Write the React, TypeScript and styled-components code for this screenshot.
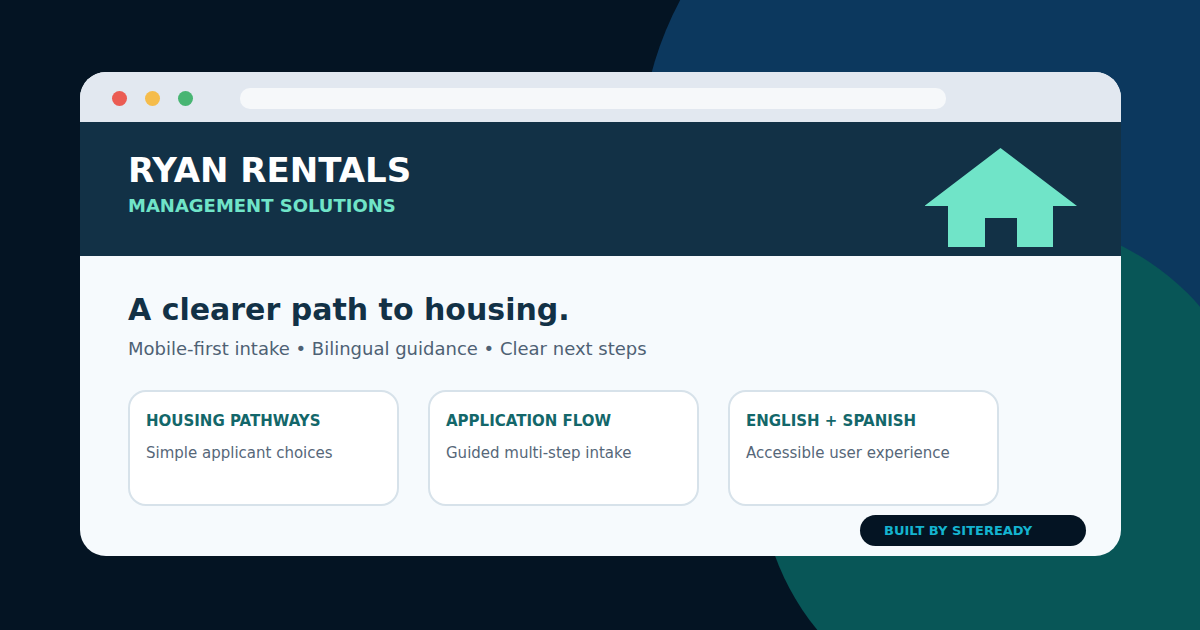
import React from "react";
import styled, { createGlobalStyle } from "styled-components";

const GlobalStyle = createGlobalStyle`
  * { box-sizing: border-box; }
  body {
    margin: 0;
    background: #041423;
    font-family: "DejaVu Sans", Verdana, sans-serif;
  }
  h1, h2, h3, p { margin: 0; }
`;

const Page = styled.div`
  position: relative;
  min-height: 100vh;
  overflow: hidden;
  padding: 72px 79px 74px 80px;
`;

const Circle = styled.div<{ $size: number; $top: number; $right: number; $color: string }>`
  position: absolute;
  top: ${(p) => p.$top}px;
  right: ${(p) => p.$right}px;
  width: ${(p) => p.$size}px;
  height: ${(p) => p.$size}px;
  border-radius: 50%;
  background: ${(p) => p.$color};
`;

const BrowserWindow = styled.main`
  position: relative;
  overflow: hidden;
  border-radius: 26px;
  background: #f6fafd;
`;

const Toolbar = styled.div`
  display: flex;
  align-items: center;
  height: 50px;
  padding: 3px 175px 0 32px;
  background: #e2e8f0;
`;

const Dots = styled.div`
  display: flex;
  gap: 18px;
  margin-right: 47px;
`;

const Dot = styled.span<{ $color: string }>`
  width: 15px;
  height: 15px;
  border-radius: 50%;
  background: ${(p) => p.$color};
`;

const AddressBar = styled.input`
  flex: 1;
  min-width: 0;
  height: 21px;
  padding: 0 12px;
  border: 0;
  border-radius: 10px;
  background: #f6f8fa;
`;

const Header = styled.header`
  display: flex;
  justify-content: space-between;
  align-items: flex-start;
  padding: 26px 44px 9px 48px;
  background: #123146;
`;

const Brand = styled.div`
  padding-top: 2px;
`;

const BrandName = styled.h1`
  font-size: 34px;
  line-height: 40px;
  color: #ffffff;
`;

const BrandTagline = styled.p`
  margin-top: 5px;
  font-size: 18px;
  font-weight: 700;
  line-height: 22px;
  color: #70e4c8;
`;

const Content = styled.section`
  display: flex;
  flex-direction: column;
  padding: 36px 35px 10px 48px;
`;

const Heading = styled.h2`
  font-size: 30px;
  line-height: 36px;
  color: #123146;
`;

const Summary = styled.p`
  margin-top: 10px;
  font-size: 18px;
  line-height: 22px;
  color: #4e6174;
`;

const Cards = styled.div`
  display: grid;
  grid-template-columns: repeat(3, 1fr);
  gap: 29px;
  margin: 30px 87px 0 0;
`;

const Card = styled.article`
  min-height: 116px;
  padding: 20px 16px;
  border: 2px solid #d7e2ea;
  border-radius: 18px;
  background: #ffffff;
`;

const CardTitle = styled.h3`
  font-size: 15px;
  line-height: 18px;
  color: #13676a;
`;

const CardText = styled.p`
  margin-top: 14px;
  font-size: 15px;
  line-height: 18px;
  color: #566779;
`;

const Badge = styled.a`
  align-self: flex-end;
  width: 226px;
  margin-top: 9px;
  padding: 0 24px;
  border-radius: 16px;
  background: #041423;
  font-size: 13px;
  font-weight: 700;
  line-height: 31px;
  color: #14b4d0;
  text-decoration: none;
`;

const features = [
  { title: "HOUSING PATHWAYS", text: "Simple applicant choices" },
  { title: "APPLICATION FLOW", text: "Guided multi-step intake" },
  { title: "ENGLISH + SPANISH", text: "Accessible user experience" },
];

function House() {
  return (
    <svg width="152" height="99" viewBox="0 0 152 99" fill="#70e4c8" aria-hidden="true">
      <path d="M75.5 0 152 58H128V99H92V70H60V99H23V58H-.5Z" />
    </svg>
  );
}

export default function App() {
  return (
    <Page>
      <GlobalStyle />
      <Circle $size={681} $top={-180} $right={-121} $color="#0c385e" />
      <Circle $size={501} $top={220} $right={-61} $color="#085657" />
      <BrowserWindow>
        <Toolbar>
          <Dots>
            <Dot $color="#eb5c53" />
            <Dot $color="#f5bc4b" />
            <Dot $color="#48b573" />
          </Dots>
          <AddressBar type="text" readOnly aria-label="Address" />
        </Toolbar>
        <Header>
          <Brand>
            <BrandName>RYAN RENTALS</BrandName>
            <BrandTagline>MANAGEMENT SOLUTIONS</BrandTagline>
          </Brand>
          <House />
        </Header>
        <Content>
          <Heading>A clearer path to housing.</Heading>
          <Summary>Mobile-first intake • Bilingual guidance • Clear next steps</Summary>
          <Cards>
            {features.map((f) => (
              <Card key={f.title}>
                <CardTitle>{f.title}</CardTitle>
                <CardText>{f.text}</CardText>
              </Card>
            ))}
          </Cards>
          <Badge href="#">BUILT BY SITEREADY</Badge>
        </Content>
      </BrowserWindow>
    </Page>
  );
}
